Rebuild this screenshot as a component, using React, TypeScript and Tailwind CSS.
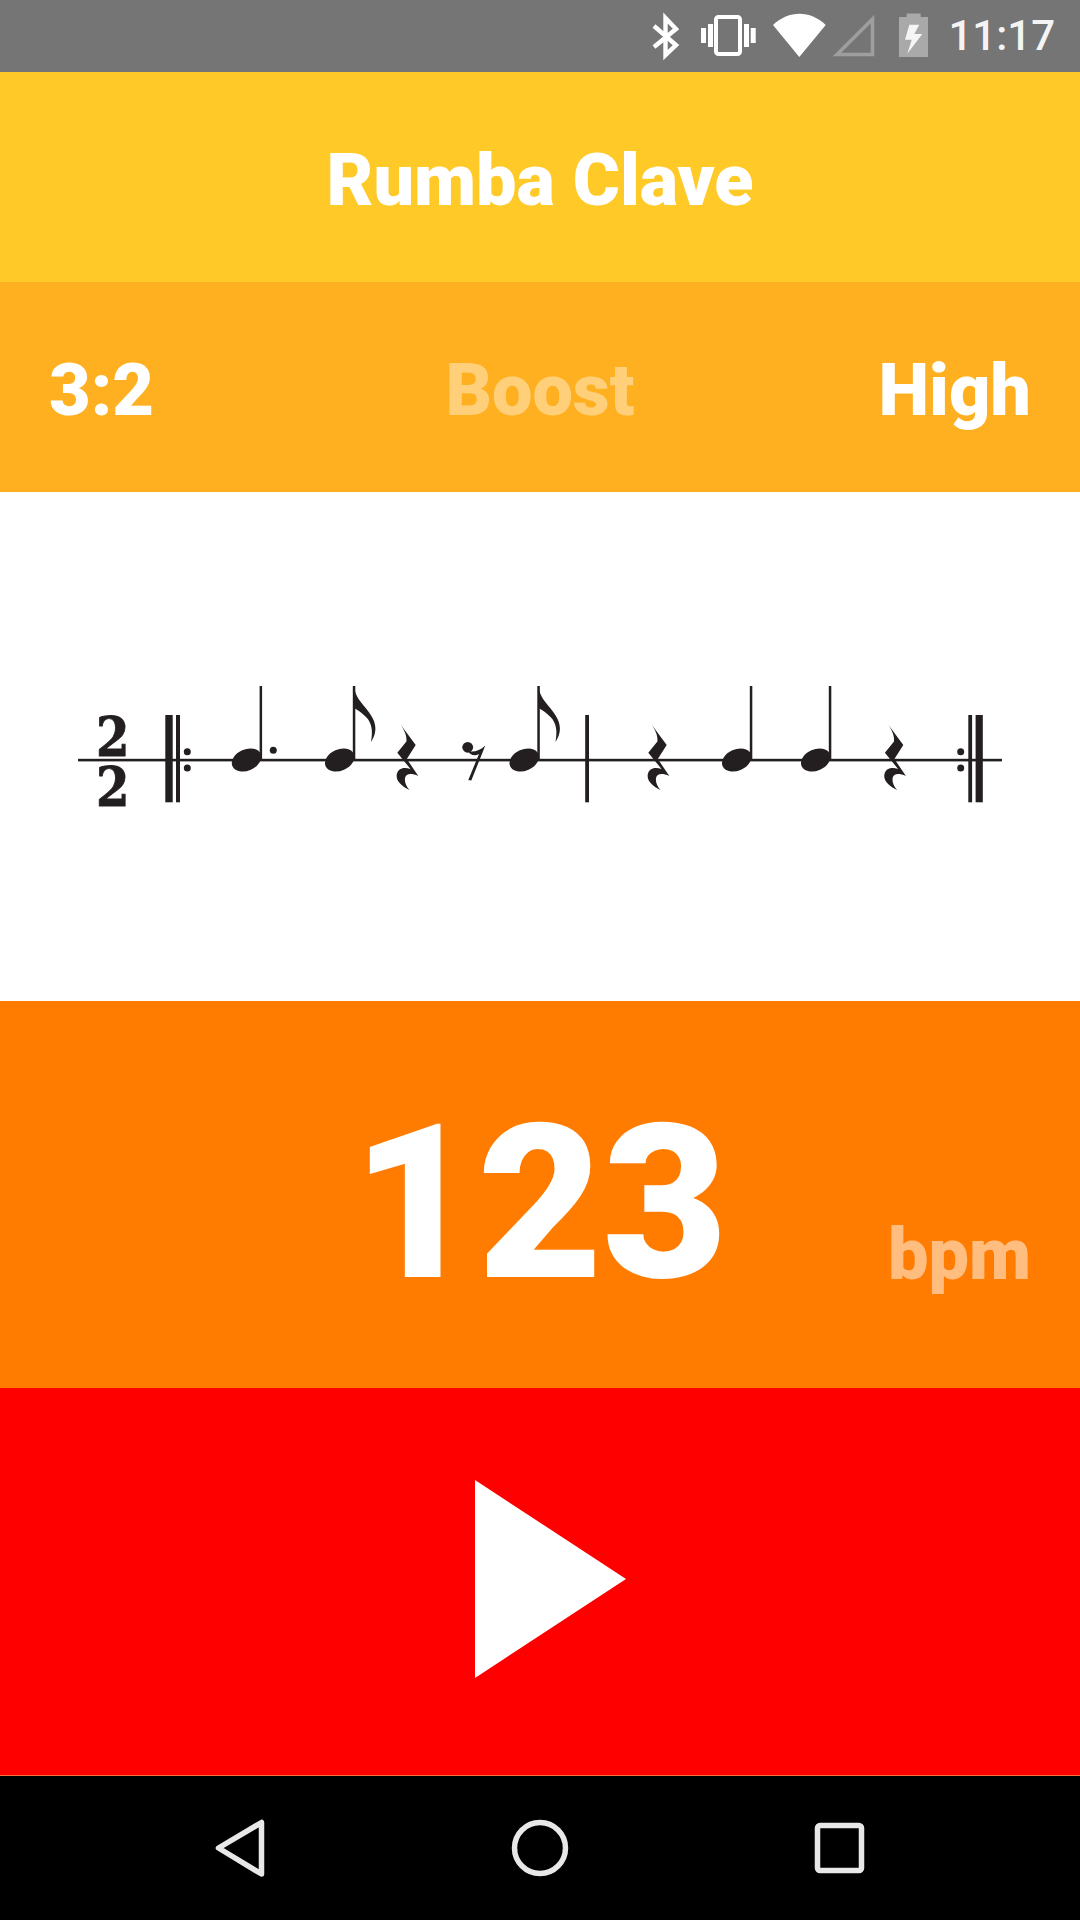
import React from "react";

const INK = "#231f20";

function QuarterRest({ dx }: { dx: number }) {
  return (
    <path
      transform={`translate(${dx} 0)`}
      d="M400.7 724.8 L415.7 745 L406.8 759 L418.3 775.9 C411 773 406 773.5 405 778 C404.5 782 406 786 409.5 790 C401 786 396 781 396.7 775 C397.5 769 403 766.5 410.5 769 L397.3 752.7 L406.4 741.5 C407 735 404 730 400.7 724.8 Z"
      fill={INK}
    />
  );
}

function Note({ x, flag, dot }: { x: number; flag?: boolean; dot?: boolean }) {
  return (
    <g fill={INK}>
      <ellipse cx={x - 14.3} cy={760} rx={15.4} ry={10.6} transform={`rotate(-24 ${x - 14.3} 760)`} />
      <rect x={x - 1.2} y={686} width={2.5} height={74} />
      {flag && (
        <path
          d={`M${x} 686 C${x + 1} 697 ${x + 8} 703 ${x + 14} 711 C${x + 21} 720 ${x + 25} 730 ${x + 17} 742 C${x + 19} 731 ${x + 18} 723 ${x + 12} 717 C${x + 8} 713 ${x + 4} 710 ${x} 708 Z`}
        />
      )}
      {dot && <circle cx={x + 12.5} cy={750.3} r={3.5} />}
    </g>
  );
}

function Music() {
  return (
    <svg width="1080" height="509" viewBox="0 492 1080 509" className="block">
      <rect x="78" y="758.8" width="924" height="2.6" fill={INK} />
      <g fontFamily="'DejaVu Serif', serif" fontWeight="700" fontSize="55" fill={INK} stroke={INK} strokeWidth="0.9">
        <text x="96" y="755.5" textLength={33.5} lengthAdjust="spacingAndGlyphs">2</text>
        <text x="96" y="805.5" textLength={33.5} lengthAdjust="spacingAndGlyphs">2</text>
      </g>
      <g fill={INK}>
        <rect x="165.3" y="715" width="7.4" height="87.3" />
        <rect x="176" y="715" width="4" height="87.3" />
        <circle cx="187.3" cy="751.7" r="3.5" />
        <circle cx="187.3" cy="768" r="3.5" />
        <rect x="585.2" y="715" width="3.8" height="87.3" />
        <circle cx="960.7" cy="751.7" r="3.5" />
        <circle cx="960.7" cy="768" r="3.5" />
        <rect x="968.3" y="715" width="3.8" height="87.3" />
        <rect x="975.6" y="715" width="7.2" height="87.3" />
        <circle cx="467.7" cy="747.3" r="5.4" />
        <path d="M468 751 C473 752.5 480 751 485.3 745.5 L471.3 780.5 L468.3 780 L479 754 C475 756.5 470.5 755.5 468 751 Z" />
      </g>
      <Note x={260.8} dot />
      <Note x={354} flag />
      <Note x={538.5} flag />
      <Note x={751} />
      <Note x={830} />
      <QuarterRest dx={0} />
      <QuarterRest dx={251} />
      <QuarterRest dx={487.6} />
    </svg>
  );
}

function StatusIcons() {
  return (
    <svg width="300" height="72" viewBox="640 0 300 72" className="block">
      <path d="M654 26 L676 45 L665.5 55 V18 L676 29 L654 47" fill="none" stroke="#fff" strokeWidth="4.4" />
      <g fill="#fff">
        <rect x="701" y="28" width="5" height="15" />
        <rect x="708" y="24" width="5" height="23" />
        <rect x="744" y="24" width="5" height="23" />
        <rect x="750.7" y="28" width="5" height="15" />
        <path d="M773 25 C789 10 810 10 825.7 25 L799.3 57 Z" />
      </g>
      <rect x="716" y="17" width="24" height="37" rx="2.5" fill="none" stroke="#fff" strokeWidth="4" />
      <path d="M837 54.5 L872.5 19 L872.5 54.5 Z" fill="none" stroke="#fff" strokeOpacity="0.3" strokeWidth="3.6" />
      <path d="M899 17 H906.7 V13.5 H920.7 V17 H928 V57 H899 Z" fill="#fff" fillOpacity="0.38" />
      <path d="M909.3 24.7 H919.3 L914.3 34 H922.3 L907.3 53.7 L911.7 39.7 H905 Z" fill="#f5f5f5" />
    </svg>
  );
}

export default function App() {
  return (
    <div className="w-[1080px] h-[1920px] flex flex-col overflow-hidden font-['Roboto',sans-serif] text-white font-black">
      <div className="h-[72px] bg-[#757575] flex items-center justify-end pr-[25px]">
        <StatusIcons />
        <span className="ml-[8px] text-[42px] font-medium text-[#f4f4f4] leading-none">11:17</span>
      </div>
      <div className="h-[210px] bg-[#ffca28] flex items-center justify-center pt-[7px]">
        <span className="text-[72px] leading-none">Rumba Clave</span>
      </div>
      <div className="h-[210px] bg-[#ffb020] grid grid-cols-3 items-center px-[49px] pt-[7px] text-[72px] leading-none">
        <span className="text-left">3:2</span>
        <span className="text-center opacity-40">Boost</span>
        <span className="text-right">High</span>
      </div>
      <div className="h-[509px] bg-white">
        <Music />
      </div>
      <div className="h-[387px] bg-[#ff7c00] relative flex items-center justify-center pt-[19px]">
        <span className="text-[216px] leading-none">123</span>
        <span className="absolute right-[49px] bottom-[97px] text-[72px] leading-none opacity-50">bpm</span>
      </div>
      <div className="h-[388px] bg-[#ff0000] flex items-center justify-center pl-[21px] pb-[5px] border-b border-[#ff6a3c]">
        <svg width="151" height="198" viewBox="0 0 151 198" className="block">
          <path d="M0 0 L151 99 L0 198 Z" fill="#fff" />
        </svg>
      </div>
      <div className="flex-1 bg-black flex items-center justify-center">
        <svg width="1080" height="144" viewBox="0 1776 1080 144" className="block">
          <path d="M218.5 1848 L261.5 1822.5 V1874 Z" fill="none" stroke="#e8e8e8" strokeWidth="5.5" strokeLinejoin="round" />
          <circle cx="540" cy="1848" r="25.5" fill="none" stroke="#e8e8e8" strokeWidth="5.5" />
          <rect x="817.5" y="1825.5" width="44" height="45" rx="2.5" fill="none" stroke="#e8e8e8" strokeWidth="5.5" />
        </svg>
      </div>
    </div>
  );
}
